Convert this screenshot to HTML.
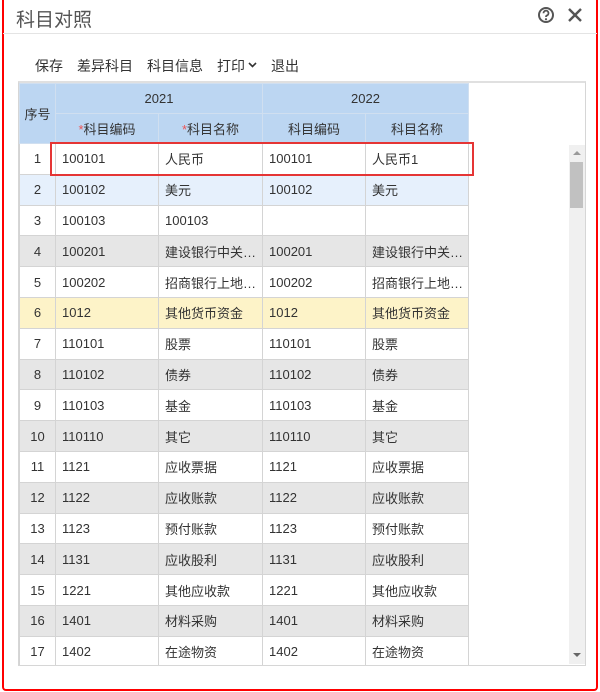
<!DOCTYPE html>
<html><head><meta charset="utf-8"><style>
*{box-sizing:border-box;margin:0;padding:0}
body{width:600px;height:692px;background:#fff;font-family:"Liberation Sans","Noto Sans CJK SC",sans-serif;color:#333;position:relative;overflow:hidden}
.win{position:absolute;left:2px;top:0;width:596px;height:691px;border:2px solid #f00;border-top:none;border-radius:0 0 4px 4px}
.title{position:absolute;left:16px;top:5px;font-size:19px;color:#555}
.tline{position:absolute;left:3px;right:3px;top:33px;height:1px;background:#e4e4e4}
.tb{position:absolute;top:56px;font-size:14px;color:#333}
.box{position:absolute;left:18px;top:81px;width:568px;height:585px;border:1px solid #d6d6d6;border-top:2px solid #e0e0e0;background:#fff}
.clip{position:absolute;left:19px;top:83px;width:550px;height:582px;overflow:hidden}
table{position:absolute;left:0;top:0;border-collapse:collapse;font-size:13px}
td,th{border:1px solid #d4d4d4;height:30.8px;padding:0 0 0 6px;text-align:left;font-weight:normal;white-space:nowrap;overflow:hidden}
th{background:#bcd6f2;text-align:center;padding:0;height:30px;border-color:#d0dff0}
td.n{text-align:center;padding:0}
tr.g td{background:#e6e6e6}
tr.b td{background:#e6f0fc}
tr.y td{background:#fdf3c8}
.r{color:#e55}
.sb{position:absolute;left:569px;top:145px;width:16px;height:519px;background:#f0f0f0}
.th{position:absolute;left:570px;top:162px;width:13px;height:46px;background:#c1c1c1}
.sel{position:absolute;left:50px;top:142px;width:424px;height:34px;border:2px solid #e53535}
</style></head><body>
<div class="win"></div>
<div class="title">科目对照</div>
<svg style="position:absolute;left:537px;top:6px" width="18" height="18" viewBox="0 0 18 18"><circle cx="9" cy="9" r="7" fill="none" stroke="#555" stroke-width="2"/><path d="M6.5 7.2a2.5 2.5 0 1 1 3.4 2.3c-.7.3-.9.7-.9 1.5" fill="none" stroke="#555" stroke-width="1.8"/><circle cx="9" cy="13.2" r="1.1" fill="#555"/></svg>
<svg style="position:absolute;left:567px;top:7px" width="16" height="16" viewBox="0 0 16 16"><path d="M2 2L14 14M14 2L2 14" stroke="#555" stroke-width="2.4"/></svg>
<div class="tline"></div>
<div class="tb" style="left:35px">保存</div>
<div class="tb" style="left:77px">差异科目</div>
<div class="tb" style="left:147px">科目信息</div>
<div class="tb" style="left:217px">打印</div>
<svg style="position:absolute;left:248px;top:62px" width="9" height="6"><path d="M1 1L4.5 4.5L8 1" fill="none" stroke="#333" stroke-width="1.6"/></svg>
<div class="tb" style="left:271px">退出</div>
<div class="box"></div>
<div class="clip">
<table>
<colgroup><col style="width:36px"><col style="width:103px"><col style="width:104px"><col style="width:103px"><col style="width:103px"></colgroup>
<tr><th rowspan="2">序号</th><th colspan="2">2021</th><th colspan="2">2022</th></tr>
<tr><th><span class="r">*</span>科目编码</th><th><span class="r">*</span>科目名称</th><th>科目编码</th><th>科目名称</th></tr>
<tr><td class="n">1</td><td>100101</td><td>人民币</td><td>100101</td><td>人民币1</td></tr>
<tr class="b"><td class="n">2</td><td>100102</td><td>美元</td><td>100102</td><td>美元</td></tr>
<tr><td class="n">3</td><td>100103</td><td>100103</td><td></td><td></td></tr>
<tr class="g"><td class="n">4</td><td>100201</td><td>建设银行中关…</td><td>100201</td><td>建设银行中关…</td></tr>
<tr><td class="n">5</td><td>100202</td><td>招商银行上地…</td><td>100202</td><td>招商银行上地…</td></tr>
<tr class="y"><td class="n">6</td><td>1012</td><td>其他货币资金</td><td>1012</td><td>其他货币资金</td></tr>
<tr><td class="n">7</td><td>110101</td><td>股票</td><td>110101</td><td>股票</td></tr>
<tr class="g"><td class="n">8</td><td>110102</td><td>债券</td><td>110102</td><td>债券</td></tr>
<tr><td class="n">9</td><td>110103</td><td>基金</td><td>110103</td><td>基金</td></tr>
<tr class="g"><td class="n">10</td><td>110110</td><td>其它</td><td>110110</td><td>其它</td></tr>
<tr><td class="n">11</td><td>1121</td><td>应收票据</td><td>1121</td><td>应收票据</td></tr>
<tr class="g"><td class="n">12</td><td>1122</td><td>应收账款</td><td>1122</td><td>应收账款</td></tr>
<tr><td class="n">13</td><td>1123</td><td>预付账款</td><td>1123</td><td>预付账款</td></tr>
<tr class="g"><td class="n">14</td><td>1131</td><td>应收股利</td><td>1131</td><td>应收股利</td></tr>
<tr><td class="n">15</td><td>1221</td><td>其他应收款</td><td>1221</td><td>其他应收款</td></tr>
<tr class="g"><td class="n">16</td><td>1401</td><td>材料采购</td><td>1401</td><td>材料采购</td></tr>
<tr><td class="n">17</td><td>1402</td><td>在途物资</td><td>1402</td><td>在途物资</td></tr>
</table>
</div>
<div class="sb"></div><div class="th"></div>
<svg style="position:absolute;left:572px;top:150px" width="10" height="6"><path d="M1 5L5 1L9 5Z" fill="#999"/></svg>
<svg style="position:absolute;left:572px;top:652px" width="10" height="6"><path d="M1 1L5 5L9 1Z" fill="#666"/></svg>
<div class="sel"></div>
</body></html>
